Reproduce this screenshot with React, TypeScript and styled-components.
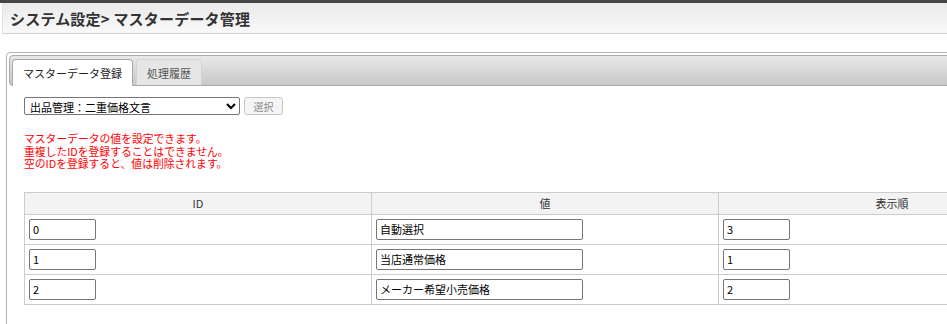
import React from 'react'
import styled, { createGlobalStyle } from 'styled-components'

const GlobalStyle = createGlobalStyle`
  html, body {
    margin: 0;
    padding: 0;
    background: #fff;
    overflow: hidden;
  }
  body {
    font-family: "Noto Sans CJK JP", "Noto Sans", sans-serif;
    font-size: 11px;
    color: #222;
  }
`

const TopBar = styled.div`
  height: 3px;
  background: #454545;
`

const PageHeader = styled.div`
  height: 30px;
  margin-left: 2px;
  border-left: 1px solid #e2e2e2;
  border-bottom: 1px solid #d4d4d4;
  background: linear-gradient(to bottom, #eaeaea, #f9f9f9);
  display: flex;
  align-items: center;
  padding-left: 7px;
`

const Title = styled.h1`
  margin: 0;
  font-size: 15px;
  font-weight: bold;
  color: #333;
  letter-spacing: 0.2px;
`

const Panel = styled.div`
  margin: 18px 0 0 6px;
  width: 1080px;
  border: 1px solid #b3b3b3;
  border-radius: 4px;
  padding: 2px;
  min-height: 300px;
`

const TabNav = styled.div`
  box-sizing: border-box;
  height: 31px;
  border: 1px solid #aaa;
  border-radius: 4px;
  background: linear-gradient(to bottom, #e8e8e8, #c8c8c8);
  padding: 3px 2px 0;
  display: flex;
  align-items: flex-start;
  gap: 3px;
`

const Tab = styled.div<{ $active?: boolean }>`
  box-sizing: border-box;
  height: ${p => (p.$active ? '27px' : '26px')};
  padding: 0 10px;
  display: flex;
  align-items: center;
  border: 1px solid ${p => (p.$active ? '#aaa' : '#d3d3d3')};
  border-bottom: none;
  border-radius: 4px 4px 0 0;
  background: ${p => (p.$active ? '#fff' : '#e6e6e6')};
  color: ${p => (p.$active ? '#212121' : '#555')};
  font-size: 11px;
  position: relative;
  z-index: 1;
`

const Content = styled.div`
  padding: 11px 15px;
`

const SelectRow = styled.div`
  display: flex;
  align-items: center;
  gap: 4px;
`

const MasterSelect = styled.select`
  box-sizing: border-box;
  width: 216px;
  height: 18px;
  border: 1px solid #767676;
  border-radius: 2px;
  font-family: inherit;
  font-size: 11px;
  color: #000;
  background: #fff;
  padding: 0 0 0 1px;
`

const SelectButton = styled.button`
  box-sizing: border-box;
  width: 39px;
  height: 18px;
  border: 1px solid #c8c8c8;
  border-radius: 3px;
  background: #f5f5f5;
  color: #8a8a8a;
  font-family: inherit;
  font-size: 10px;
  padding: 0;
`

const Notice = styled.p`
  margin: 17px 0 0;
  color: #f00;
  font-size: 10.8px;
  line-height: 12.5px;
`

const Table = styled.table`
  margin-top: 22px;
  width: 1042px;
  border-collapse: collapse;
  border: 1px solid #ccc;
  table-layout: fixed;
`

const HeadCell = styled.th`
  height: 21px;
  background: #f2f3f2;
  border: 1px solid #ccc;
  font-weight: normal;
  color: #333;
  font-size: 11px;
  text-align: center;
  padding: 0;
`

const Cell = styled.td`
  height: 29px;
  border: 1px solid #ccc;
  padding: 0 4px;
  vertical-align: middle;
`

const CellInput = styled.input<{ $wide?: boolean }>`
  box-sizing: border-box;
  width: ${p => (p.$wide ? '207px' : '67px')};
  height: 21px;
  border: 1px solid #767676;
  border-radius: 2px;
  padding: 0 3px;
  font-family: inherit;
  font-size: 11px;
  color: #000;
  display: block;
`

const rows = [
  { id: '0', value: '自動選択', order: '3' },
  { id: '1', value: '当店通常価格', order: '1' },
  { id: '2', value: 'メーカー希望小売価格', order: '2' },
]

const App: React.FC = () => {
  return (
    <>
      <GlobalStyle />
      <TopBar />
      <PageHeader>
        <Title>システム設定&gt; マスターデータ管理</Title>
      </PageHeader>
      <Panel>
        <TabNav>
          <Tab $active>マスターデータ登録</Tab>
          <Tab>処理履歴</Tab>
        </TabNav>
        <Content>
          <SelectRow>
            <MasterSelect defaultValue="double">
              <option value="double">出品管理：二重価格文言</option>
            </MasterSelect>
            <SelectButton disabled>選択</SelectButton>
          </SelectRow>
          <Notice>
            マスターデータの値を設定できます。<br />
            重複したIDを登録することはできません。<br />
            空のIDを登録すると、値は削除されます。
          </Notice>
          <Table>
            <thead>
              <tr>
                <HeadCell>ID</HeadCell>
                <HeadCell>値</HeadCell>
                <HeadCell>表示順</HeadCell>
              </tr>
            </thead>
            <tbody>
              {rows.map(r => (
                <tr key={r.id}>
                  <Cell><CellInput defaultValue={r.id} /></Cell>
                  <Cell><CellInput $wide defaultValue={r.value} /></Cell>
                  <Cell><CellInput defaultValue={r.order} /></Cell>
                </tr>
              ))}
            </tbody>
          </Table>
        </Content>
      </Panel>
    </>
  )
}

export default App
